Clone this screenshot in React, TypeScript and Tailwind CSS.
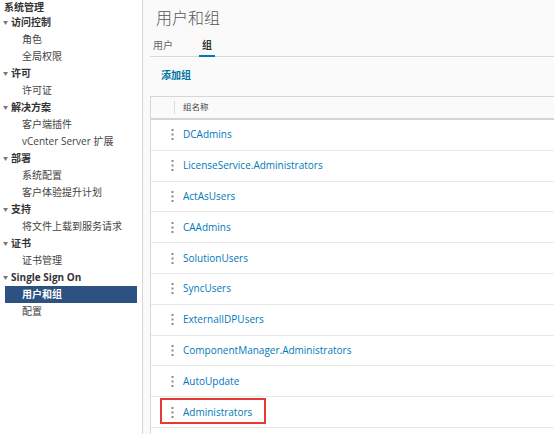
import React from 'react';

const cjk = { fontFamily: '"Open Sans", "Noto Sans CJK SC", sans-serif' };

type NavItem = { label: string; level: 0 | 1 | 2; active?: boolean };

const nav: NavItem[] = [
  { label: '系统管理', level: 0 },
  { label: '访问控制', level: 1 },
  { label: '角色', level: 2 },
  { label: '全局权限', level: 2 },
  { label: '许可', level: 1 },
  { label: '许可证', level: 2 },
  { label: '解决方案', level: 1 },
  { label: '客户端插件', level: 2 },
  { label: 'vCenter Server 扩展', level: 2 },
  { label: '部署', level: 1 },
  { label: '系统配置', level: 2 },
  { label: '客户体验提升计划', level: 2 },
  { label: '支持', level: 1 },
  { label: '将文件上载到服务请求', level: 2 },
  { label: '证书', level: 1 },
  { label: '证书管理', level: 2 },
  { label: 'Single Sign On', level: 1 },
  { label: '用户和组', level: 2, active: true },
  { label: '配置', level: 2 },
];

const groups = [
  'DCAdmins',
  'LicenseService.Administrators',
  'ActAsUsers',
  'CAAdmins',
  'SolutionUsers',
  'SyncUsers',
  'ExternalIDPUsers',
  'ComponentManager.Administrators',
  'AutoUpdate',
  'Administrators',
];

// Vertical ellipsis used as row action
const Dots = () => (
  <svg width="3" height="11" viewBox="0 0 3 11" className="shrink-0">
    <rect x="0.5" y="0" width="2" height="2" fill="#8a8a8a" />
    <rect x="0.5" y="4.5" width="2" height="2" fill="#8a8a8a" />
    <rect x="0.5" y="9" width="2" height="2" fill="#8a8a8a" />
  </svg>
);

const Sidebar = () => (
  <div className="w-[143px] shrink-0 border-r border-[#d7d7d7] bg-white pt-[1px]">
    {nav.map((item, i) => {
      if (item.level === 0)
        return (
          <div key={i} className="h-[13px] pl-[4px] text-[10px] font-bold leading-[13px] text-[#333]">
            {item.label}
          </div>
        );
      if (item.level === 1)
        return (
          <div key={i} className="flex h-[17px] items-center pl-[3px] text-[10px] font-bold text-[#333]">
            <span className="mr-[3px] text-[5px] text-[#777]">▼</span>
            {item.label}
          </div>
        );
      return (
        <div
          key={i}
          className={
            item.active
              ? 'mx-[5px] flex h-[17px] items-center bg-[#2d5181] pl-[17px] text-[10px] font-bold text-white'
              : 'flex h-[17px] items-center pl-[22px] text-[10px] text-[#444]'
          }
        >
          {item.label}
        </div>
      );
    })}
  </div>
);

export default function App() {
  return (
    <div className="flex h-[434px] w-[554px] overflow-hidden bg-[#fafafa]" style={cjk}>
      <Sidebar />
      <div className="flex min-w-0 flex-1 flex-col pl-[7px]">
        <div className="pl-[6px] pt-[7px] text-[16px] font-light leading-[22px] text-[#565656]">用户和组</div>
        <div className="mt-[10px] flex h-[18px] items-start gap-[26px] border-b border-[#d8d8d8] pl-[3px] text-[10px]">
          <span className="leading-[12px] text-[#666]">用户</span>
          <span className="relative h-full px-[3px] font-semibold leading-[12px] text-[#333]">
            组
            <span className="absolute bottom-[-1px] left-0 right-0 h-[2px] bg-[#0079b8]" />
          </span>
        </div>
        <div className="mt-[11px] pl-[11px] text-[10px] font-bold leading-[14px] text-[#0072a3]">添加组</div>
        <div className="mt-[14px] flex-1 border-l border-t border-[#d7d7d7] bg-white">
          <div className="flex h-[23px] items-center border-b-2 border-[#d4d4d4] bg-[#fafafa]">
            <div className="h-[13px] w-[24px] border-r border-[#ddd]" />
            <span className="pl-[8px] text-[8.5px] text-[#444]">组名称</span>
          </div>
          {groups.map((g, i) => (
            <div key={g} className="flex h-[30.8px] items-center border-b border-[#e8e8e8]">
              <div className="flex w-[32px] justify-end pr-[9px]">
                <Dots />
              </div>
              <span className="text-[10px] text-[#0079b8]">{g}</span>
              {i === groups.length - 1 && (
                <div className="pointer-events-none absolute left-[160px] top-[398px] h-[26px] w-[106px] border-2 border-[#e53935]" />
              )}
            </div>
          ))}
        </div>
      </div>
    </div>
  );
}
